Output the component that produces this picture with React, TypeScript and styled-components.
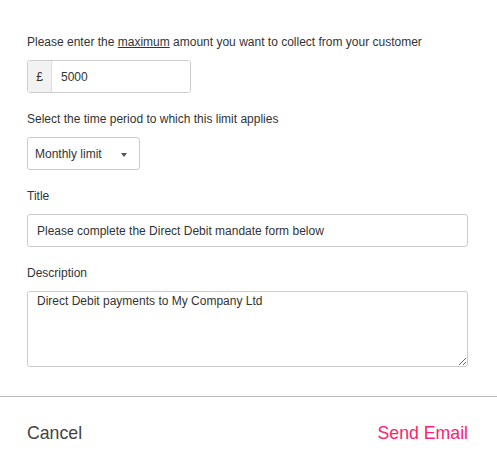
import React from 'react';
import styled, { createGlobalStyle } from 'styled-components';

const GlobalStyle = createGlobalStyle`
  body {
    margin: 0;
    background: #fff;
    font-family: 'Liberation Sans', Arial, sans-serif;
    color: #333;
  }
`;

const FormStyled = styled.div`
  display: flex;
  flex-direction: column;
  padding: 35px 29px 0 27px;
`;

const FieldStyled = styled.div`
  display: flex;
  flex-direction: column;
  margin-bottom: 19px;
`;

const LabelStyled = styled.label`
  font-size: 12px;
  line-height: 15px;
  color: #333;
  margin-bottom: 10px;

  u {
    text-decoration: underline;
  }
`;

const InputGroupStyled = styled.div`
  display: flex;
  width: 164px;
  height: 33px;
  box-sizing: border-box;
  border: 1px solid #ccc;
  border-radius: 3px;
  overflow: hidden;
`;

const PrefixStyled = styled.span`
  display: flex;
  align-items: center;
  justify-content: center;
  width: 23px;
  background: #f2f2f2;
  border-right: 1px solid #ddd;
  font-size: 12px;
  color: #333;
`;

const BareInputStyled = styled.input`
  flex: 1;
  border: 0;
  outline: none;
  padding: 0 0 0 9px;
  font: inherit;
  font-size: 12px;
  color: #333;
  min-width: 0;
`;

const SelectStyled = styled.div`
  display: flex;
  align-items: center;
  justify-content: space-between;
  width: 113px;
  height: 33px;
  box-sizing: border-box;
  padding: 0 12px 0 7px;
  border: 1px solid #ccc;
  border-radius: 3px;
  font-size: 12px;
  color: #333;
`;

const CaretStyled = styled.span`
  width: 0;
  height: 0;
  border-left: 3px solid transparent;
  border-right: 3px solid transparent;
  border-top: 4px solid #555;
  margin-top: 2px;
`;

const TextInputStyled = styled.input`
  width: 100%;
  height: 33px;
  box-sizing: border-box;
  border: 1px solid #ccc;
  border-radius: 3px;
  padding: 0 9px;
  font: inherit;
  font-size: 12px;
  color: #333;
  outline: none;
`;

const TextAreaStyled = styled.textarea`
  width: 100%;
  height: 76px;
  box-sizing: border-box;
  border: 1px solid #ccc;
  border-radius: 3px;
  padding: 2px 9px;
  font: inherit;
  font-size: 12px;
  line-height: 14px;
  color: #333;
  outline: none;
  resize: vertical;
  display: block;
`;

const DividerStyled = styled.hr`
  margin: 10px 0 0;
  border: 0;
  border-top: 1px solid #bbb;
`;

const FooterStyled = styled.div`
  display: flex;
  justify-content: space-between;
  align-items: center;
  padding: 26px 29px 0 27px;
`;

const FooterButtonStyled = styled.button`
  background: none;
  border: 0;
  padding: 0;
  font-family: 'Liberation Sans', Arial, sans-serif;
  font-size: 17.7px;
  line-height: 21px;
  color: ${({ $primary }: { $primary?: boolean }) => ($primary ? '#fc2270' : '#444')};
  cursor: pointer;
`;

export default function App() {
  return (
    <>
      <GlobalStyle />
      <FormStyled>
        <FieldStyled>
          <LabelStyled>
            Please enter the <u>maximum</u> amount you want to collect from your customer
          </LabelStyled>
          <InputGroupStyled>
            <PrefixStyled>£</PrefixStyled>
            <BareInputStyled defaultValue="5000" />
          </InputGroupStyled>
        </FieldStyled>
        <FieldStyled>
          <LabelStyled>Select the time period to which this limit applies</LabelStyled>
          <SelectStyled>
            <span>Monthly limit</span>
            <CaretStyled />
          </SelectStyled>
        </FieldStyled>
        <FieldStyled>
          <LabelStyled>Title</LabelStyled>
          <TextInputStyled defaultValue="Please complete the Direct Debit mandate form below" />
        </FieldStyled>
        <FieldStyled>
          <LabelStyled>Description</LabelStyled>
          <TextAreaStyled defaultValue="Direct Debit payments to My Company Ltd" />
        </FieldStyled>
      </FormStyled>
      <DividerStyled />
      <FooterStyled>
        <FooterButtonStyled>Cancel</FooterButtonStyled>
        <FooterButtonStyled $primary>Send Email</FooterButtonStyled>
      </FooterStyled>
    </>
  );
}
